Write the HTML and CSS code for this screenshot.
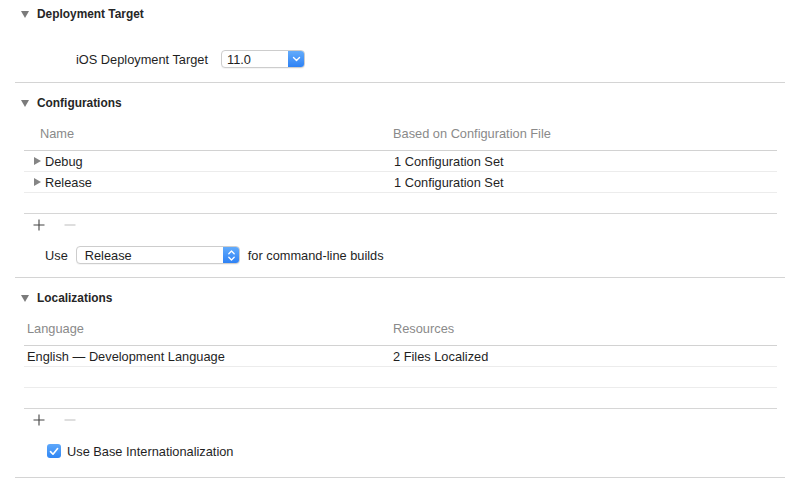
FILE: index.html
```html
<!DOCTYPE html>
<html>
<head>
<meta charset="utf-8">
<link rel="stylesheet" href="styles.css">
</head>
<body>
<div class="page">
  <section class="section">
    <div class="section-head">
      <span class="disc-down"></span>
      <span class="section-title">Deployment Target</span>
    </div>
    <div class="target-row">
      <span class="target-label">iOS Deployment Target</span>
      <div class="popup popup-small">
        <span class="popup-text">11.0</span>
        <span class="popup-btn">
          <svg width="9" height="6" viewBox="0 0 9 6"><path d="M1.5 1.5 L4.5 4.5 L7.5 1.5" fill="none" stroke="#fff" stroke-width="1.4" stroke-linecap="round" stroke-linejoin="round"/></svg>
        </span>
      </div>
    </div>
  </section>

  <section class="section">
    <div class="section-head">
      <span class="disc-down"></span>
      <span class="section-title">Configurations</span>
    </div>
    <div class="table">
      <div class="trow thead config">
        <span class="cell name-head">Name</span>
        <span class="cell">Based on Configuration File</span>
      </div>
      <div class="trow config">
        <span class="cell name-cell"><span class="disc-right"></span>Debug</span>
        <span class="cell val">1 Configuration Set</span>
      </div>
      <div class="trow config">
        <span class="cell name-cell"><span class="disc-right"></span>Release</span>
        <span class="cell val">1 Configuration Set</span>
      </div>
      <div class="trow config last">
        <span class="cell"></span>
        <span class="cell"></span>
      </div>
    </div>
    <div class="toolbar">
      <svg class="plus" width="12" height="12" viewBox="0 0 12 12"><path d="M6 0.5 V11.5 M0.5 6 H11.5" stroke="#444" stroke-width="1.1"/></svg>
      <svg class="minus" width="12" height="12" viewBox="0 0 12 12"><path d="M0.5 6 H11.5" stroke="#c4c4c4" stroke-width="1.1"/></svg>
    </div>
    <div class="use-row">
      <span class="use-label">Use</span>
      <div class="popup popup-wide">
        <span class="popup-text">Release</span>
        <span class="popup-btn">
          <svg width="9" height="13" viewBox="0 0 9 13"><path d="M1.8 4.8 L4.5 2 L7.2 4.8 M1.8 8.2 L4.5 11 L7.2 8.2" fill="none" stroke="#fff" stroke-width="1.3" stroke-linecap="round" stroke-linejoin="round"/></svg>
        </span>
      </div>
      <span class="use-after">for command-line builds</span>
    </div>
  </section>

  <section class="section">
    <div class="section-head">
      <span class="disc-down"></span>
      <span class="section-title">Localizations</span>
    </div>
    <div class="table">
      <div class="trow thead loc">
        <span class="cell">Language</span>
        <span class="cell">Resources</span>
      </div>
      <div class="trow loc">
        <span class="cell">English — Development Language</span>
        <span class="cell">2 Files Localized</span>
      </div>
      <div class="trow loc">
        <span class="cell"></span>
        <span class="cell"></span>
      </div>
      <div class="trow loc last">
        <span class="cell"></span>
        <span class="cell"></span>
      </div>
    </div>
    <div class="toolbar">
      <svg class="plus" width="12" height="12" viewBox="0 0 12 12"><path d="M6 0.5 V11.5 M0.5 6 H11.5" stroke="#444" stroke-width="1.1"/></svg>
      <svg class="minus" width="12" height="12" viewBox="0 0 12 12"><path d="M0.5 6 H11.5" stroke="#c4c4c4" stroke-width="1.1"/></svg>
    </div>
    <div class="check-row">
      <span class="checkbox">
        <svg width="10" height="9" viewBox="0 0 10 9"><path d="M1.5 4.6 L4 7.2 L8.6 1.6" fill="none" stroke="#fff" stroke-width="1.6" stroke-linecap="round" stroke-linejoin="round"/></svg>
      </span>
      <span class="check-label">Use Base Internationalization</span>
    </div>
  </section>
</div>
</body>
</html>
```

FILE: styles.css
```css
* { box-sizing: border-box; }

html, body {
  margin: 0;
  padding: 0;
  background: #ffffff;
}

body {
  font-family: "Liberation Sans", Arial, sans-serif;
  font-size: 12.8px;
  color: #1f1f1f;
  width: 800px;
  height: 495px;
  overflow: hidden;
}

.section {
  margin: 0 15px;
  border-bottom: 1px solid #d4d4d4;
}

.section + .section {
  padding-top: 6px;
}

.section-head {
  height: 28px;
  display: flex;
  align-items: center;
  padding-left: 6px;
}

.disc-down {
  width: 0;
  height: 0;
  border-left: 4.5px solid transparent;
  border-right: 4.5px solid transparent;
  border-top: 7px solid #7b7b7b;
  margin-right: 8px;
  margin-top: 1px;
}

.section-title {
  font-weight: bold;
  font-size: 11.9px;
  color: #262626;
}

/* Deployment target */
.target-row {
  display: flex;
  align-items: center;
  height: 18px;
  margin: 22px 0 14px;
}

.target-label {
  width: 193px;
  text-align: right;
  margin-right: 13px;
}

.popup {
  display: flex;
  align-items: stretch;
  height: 18px;
  border: 1px solid #cdcdcd;
  border-radius: 4px;
  background: #fff;
  box-shadow: 0 1px 0 rgba(0,0,0,0.04);
  overflow: hidden;
}

.popup-small { width: 84px; }
.popup-wide { width: 164px; }

.popup-text {
  flex: 1;
  display: flex;
  align-items: center;
  padding-left: 5px;
  color: #1e1e1e;
}

.popup-wide .popup-text { padding-left: 8px; }

.popup-btn {
  width: 17px;
  display: flex;
  align-items: center;
  justify-content: center;
  background: linear-gradient(#66aefc, #2b7ff4);
  margin: -1px -1px -1px 0;
  border-radius: 0 4px 4px 0;
}

/* Tables */
.table {
  margin: 0 8px 0 9px;
}

.trow {
  display: grid;
  grid-template-columns: 369px 1fr;
  align-items: center;
  height: 21px;
  border-bottom: 1px solid #ececec;
}

.trow.thead {
  height: 34px;
  padding-bottom: 1px;
  color: #8a8a8a;
  border-bottom: 1px solid #d2d2d2;
}

.trow.last {
  border-bottom: 1px solid #d6d6d6;
}

.config .cell:first-child { padding-left: 16px; }
.config .name-cell {
  display: flex;
  align-items: center;
  padding-left: 10px !important;
}
.config .val { padding-left: 1px; }

.loc .cell:first-child { padding-left: 3px; }

.disc-right {
  width: 0;
  height: 0;
  border-top: 4.5px solid transparent;
  border-bottom: 4.5px solid transparent;
  border-left: 7px solid #858585;
  margin-right: 4px;
}

.toolbar {
  height: 22px;
  display: flex;
  align-items: center;
  padding-left: 18px;
}

.toolbar .minus { margin-left: 19px; }

.use-row {
  display: flex;
  align-items: center;
  height: 18px;
  margin: 10px 0 13px;
  padding-left: 30px;
}

.use-label { margin-right: 8px; }
.use-after { margin-left: 8px; }

.check-row {
  display: flex;
  align-items: center;
  height: 18px;
  margin: 11px 0 17px;
  padding-left: 32px;
}

.checkbox {
  width: 14px;
  height: 14px;
  border-radius: 3px;
  background: linear-gradient(#5ea8fb, #3086f4);
  display: flex;
  align-items: center;
  justify-content: center;
  margin-right: 6px;
}
```
